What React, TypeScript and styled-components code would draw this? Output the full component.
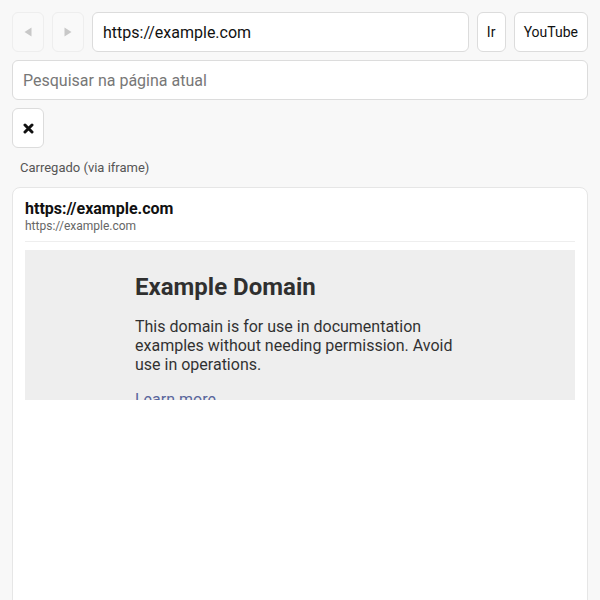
import React from "react";
import styled, { createGlobalStyle } from "styled-components";

const Global = createGlobalStyle`
  html, body { margin: 0; padding: 0; background: #f8f8f8; }
  body { font-family: Roboto, "Noto Sans", "Liberation Sans", sans-serif; color: #111; }
  * { box-sizing: border-box; }
`;

const Page = styled.div`
  display: flex;
  flex-direction: column;
  gap: 8px;
  padding: 12px;
`;

const Row = styled.div`
  display: flex;
  gap: 8px;
  align-items: stretch;
`;

const Button = styled.button<{ $disabled?: boolean; $square?: boolean }>`
  height: 40px;
  min-width: 29px;
  padding: ${(p) => (p.$square ? "0" : "0 9px")};
  width: ${(p) => (p.$square ? "32px" : "auto")};
  border: 1px solid ${(p) => (p.$disabled ? "#eeeeee" : "#dcdcdc")};
  border-radius: 6px;
  background: ${(p) => (p.$disabled ? "#f9f9f9" : "#ffffff")};
  color: ${(p) => (p.$disabled ? "#c8c8c8" : "#111")};
  font-family: Roboto, "Liberation Sans", sans-serif;
  font-size: 14px;
  display: flex;
  align-items: center;
  justify-content: center;
  flex: none;
`;

const Input = styled.input`
  flex: 1;
  min-width: 0;
  height: 40px;
  border: 1px solid #dcdcdc;
  border-radius: 6px;
  background: #fff;
  padding: 0 10px;
  font-family: Roboto, "Liberation Sans", sans-serif;
  font-size: 16px;
  color: #111;
  outline: none;
  &::placeholder { color: #777; }
`;

const Status = styled.div`
  padding: 4px 8px 3px;
  font-size: 13px;
  line-height: 16px;
  color: #555;
`;

const Card = styled.div`
  background: #fff;
  border: 1px solid #e6e6e6;
  border-radius: 8px;
  padding: 11px 12px 12px;
  min-height: 440px;
  display: flex;
  flex-direction: column;
`;

const CardTitle = styled.div`
  font-weight: 700;
  font-size: 16px;
  line-height: 20px;
  color: #111;
`;

const CardSub = styled.div`
  font-size: 12px;
  line-height: 14px;
  color: #666;
`;

const Divider = styled.div`
  height: 1px;
  background: #eeeeee;
  margin: 8px 0 8px;
`;

const Frame = styled.div`
  height: 150px;
  overflow: hidden;
  background: #eee;
  padding-top: 22.5px;
`;

const FrameBody = styled.div`
  width: 60%;
  margin: 0 auto;
  opacity: 0.8;
  font-family: Roboto, "Noto Sans", sans-serif;
  color: #000;
`;

const H1 = styled.h1`
  font-size: 24px;
  font-weight: 700;
  line-height: 28px;
  margin: 0 0 16px;
`;

const P = styled.p`
  font-size: 16px;
  line-height: 19px;
  margin: 0 0 16px;
`;

const Link = styled.a`
  font-size: 16px;
  line-height: 19px;
  color: #348;
  text-decoration: none;
`;

const Tri = styled.svg`
  width: 8px;
  height: 10px;
  fill: currentColor;
`;

const Close = styled.svg`
  width: 11px;
  height: 11px;
  stroke: #111;
  stroke-width: 3;
  stroke-linecap: round;
`;

export default function App() {
  return (
    <>
      <Global />
      <Page>
        <Row>
          <Button $disabled $square aria-label="Voltar">
            <Tri viewBox="0 0 8 10"><path d="M7.5 0.5 L0.5 5 L7.5 9.5 Z" /></Tri>
          </Button>
          <Button $disabled $square aria-label="Avançar">
            <Tri viewBox="0 0 8 10"><path d="M0.5 0.5 L7.5 5 L0.5 9.5 Z" /></Tri>
          </Button>
          <Input defaultValue="https://example.com" />
          <Button>Ir</Button>
          <Button>YouTube</Button>
        </Row>
        <Row>
          <Input placeholder="Pesquisar na página atual" />
        </Row>
        <Row>
          <Button $square aria-label="Fechar">
            <Close viewBox="0 0 11 11"><path d="M2 2 L9 9 M9 2 L2 9" /></Close>
          </Button>
        </Row>
        <Status>Carregado (via iframe)</Status>
        <Card>
          <CardTitle>https://example.com</CardTitle>
          <CardSub>https://example.com</CardSub>
          <Divider />
          <Frame>
            <FrameBody>
              <H1>Example Domain</H1>
              <P>This domain is for use in documentation examples without needing permission. Avoid use in operations.</P>
              <Link href="#">Learn more</Link>
            </FrameBody>
          </Frame>
        </Card>
      </Page>
    </>
  );
}
